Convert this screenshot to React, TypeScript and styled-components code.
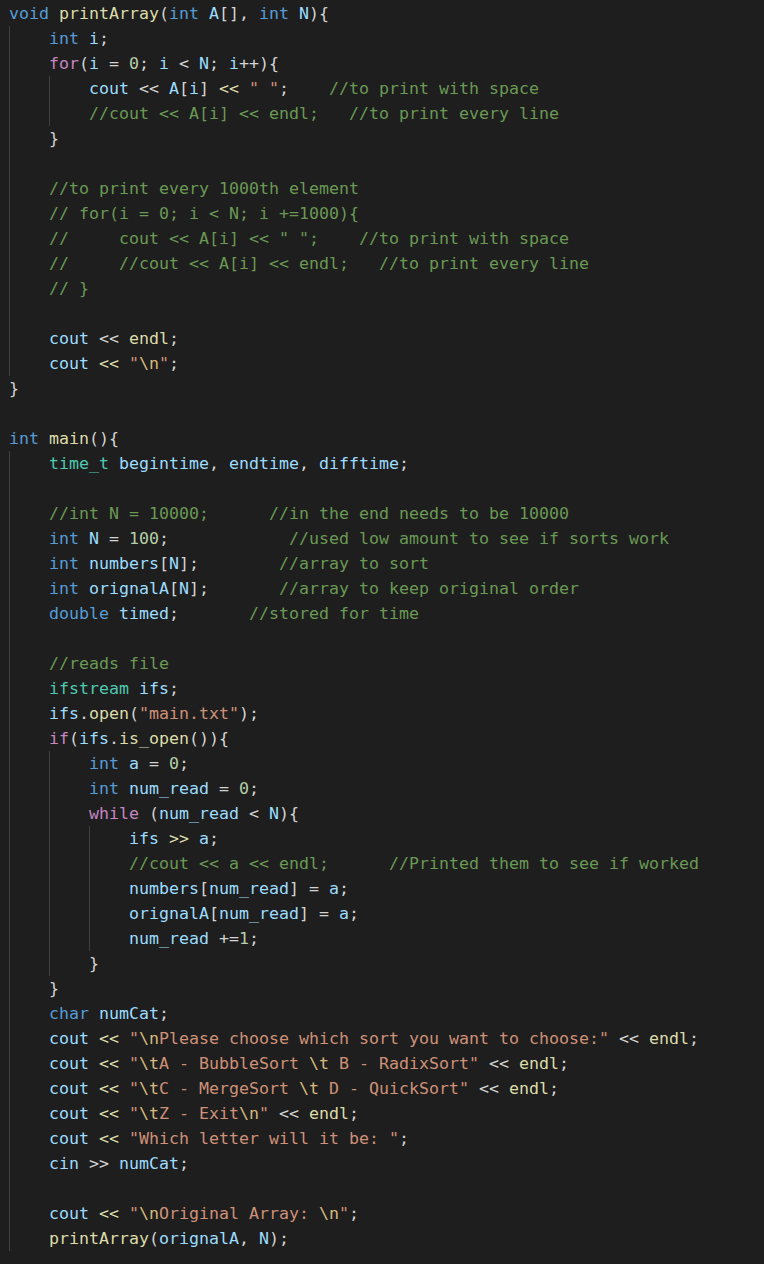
import React from "react";
import styled, { createGlobalStyle } from "styled-components";

const Global = createGlobalStyle`
  html, body { margin: 0; padding: 0; background: #1e1e1e; }
`;

const C = {
  text: "#d4d4d4",
  kw: "#569cd6",
  ctrl: "#c586c0",
  type: "#4ec9b0",
  fn: "#dcdcaa",
  vr: "#9cdcfe",
  num: "#b5cea8",
  str: "#ce9178",
  esc: "#d7ba7d",
  comment: "#6a9955",
};

const Editor = styled.div`
  box-sizing: border-box;
  min-height: 1264px;
  background: #1e1e1e;
  padding: 1px 0 0 9px;
  font-family: "DejaVu Sans Mono", "Liberation Mono", monospace;
  font-size: 16.61px;
  color: ${C.text};
`;

const Line = styled.div`
  display: flex;
  height: 25px;
  line-height: 25px;
  white-space: pre;
`;

const Guide = styled.span`
  flex: none;
  width: 4ch;
  height: 25px;
  box-shadow: inset 1px 0 0 #404040;
`;

const Code = styled.span`
  white-space: pre;
`;

const Tok = styled.span<{ $c: string }>`
  color: ${(p) => p.$c};
`;

const LINES: string[] = [
  String.raw`void printArray(int A[], int N){`,
  String.raw`    int i;`,
  String.raw`    for(i = 0; i < N; i++){`,
  String.raw`        cout << A[i] << " ";    //to print with space`,
  String.raw`        //cout << A[i] << endl;   //to print every line`,
  String.raw`    }`,
  String.raw`    `,
  String.raw`    //to print every 1000th element`,
  String.raw`    // for(i = 0; i < N; i +=1000){`,
  String.raw`    //     cout << A[i] << " ";    //to print with space`,
  String.raw`    //     //cout << A[i] << endl;   //to print every line`,
  String.raw`    // }`,
  String.raw`    `,
  String.raw`    cout << endl;`,
  String.raw`    cout << "\n";`,
  String.raw`}`,
  String.raw``,
  String.raw`int main(){`,
  String.raw`    time_t begintime, endtime, difftime;`,
  String.raw`    `,
  String.raw`    //int N = 10000;      //in the end needs to be 10000`,
  String.raw`    int N = 100;            //used low amount to see if sorts work`,
  String.raw`    int numbers[N];        //array to sort`,
  String.raw`    int orignalA[N];       //array to keep original order`,
  String.raw`    double timed;       //stored for time`,
  String.raw`    `,
  String.raw`    //reads file`,
  String.raw`    ifstream ifs;`,
  String.raw`    ifs.open("main.txt");`,
  String.raw`    if(ifs.is_open()){`,
  String.raw`        int a = 0;`,
  String.raw`        int num_read = 0;`,
  String.raw`        while (num_read < N){`,
  String.raw`            ifs >> a;`,
  String.raw`            //cout << a << endl;      //Printed them to see if worked`,
  String.raw`            numbers[num_read] = a;`,
  String.raw`            orignalA[num_read] = a;`,
  String.raw`            num_read +=1;`,
  String.raw`        }`,
  String.raw`    }`,
  String.raw`    char numCat;`,
  String.raw`    cout << "\nPlease choose which sort you want to choose:" << endl;`,
  String.raw`    cout << "\tA - BubbleSort \t B - RadixSort" << endl;`,
  String.raw`    cout << "\tC - MergeSort \t D - QuickSort" << endl;`,
  String.raw`    cout << "\tZ - Exit\n" << endl;`,
  String.raw`    cout << "Which letter will it be: ";`,
  String.raw`    cin >> numCat;`,
  String.raw`    `,
  String.raw`    cout << "\nOriginal Array: \n";`,
  String.raw`    printArray(orignalA, N);`,
];

const KW = new Set(["void", "int", "double", "char"]);
const CTRL = new Set(["for", "if", "while"]);
const TYPES = new Set(["ifstream", "time_t"]);

type Token = [string, string];

function tokenize(s: string): Token[] {
  const out: Token[] = [];
  let i = 0;
  let plain = "";
  const flush = () => {
    if (plain) {
      out.push([C.text, plain]);
      plain = "";
    }
  };
  while (i < s.length) {
    const ch = s[i];
    if (s.startsWith("//", i)) {
      flush();
      out.push([C.comment, s.slice(i)]);
      break;
    }
    if (ch === '"') {
      flush();
      out.push([C.str, '"']);
      let j = i + 1;
      let buf = "";
      while (j < s.length && s[j] !== '"') {
        if (s[j] === "\\") {
          if (buf) {
            out.push([C.str, buf]);
            buf = "";
          }
          out.push([C.esc, s.slice(j, j + 2)]);
          j += 2;
        } else {
          buf += s[j];
          j++;
        }
      }
      if (buf) out.push([C.str, buf]);
      out.push([C.str, '"']);
      i = j + 1;
      continue;
    }
    if (/[A-Za-z_]/.test(ch)) {
      flush();
      let j = i;
      while (j < s.length && /[A-Za-z0-9_]/.test(s[j])) j++;
      const word = s.slice(i, j);
      let color = C.vr;
      if (KW.has(word)) color = C.kw;
      else if (CTRL.has(word)) color = C.ctrl;
      else if (TYPES.has(word)) color = C.type;
      else if (word === "endl" || s[j] === "(") color = C.fn;
      out.push([color, word]);
      i = j;
      continue;
    }
    if (/[0-9]/.test(ch)) {
      flush();
      let j = i;
      while (j < s.length && /[0-9]/.test(s[j])) j++;
      out.push([C.num, s.slice(i, j)]);
      i = j;
      continue;
    }
    if (s.startsWith("<<", i) || s.startsWith(">>", i)) {
      flush();
      const rest = s.slice(i + 2).trimStart();
      const yellow = rest.startsWith('"') || s.trim().startsWith("ifs >>");
      out.push([yellow ? C.fn : C.text, s.slice(i, i + 2)]);
      i += 2;
      continue;
    }
    plain += ch;
    i++;
  }
  flush();
  return out;
}

function CodeLine({ src }: { src: string }) {
  const lead = src.length - src.trimStart().length;
  const levels = Math.floor(lead / 4);
  const body = src.slice(levels * 4);
  return (
    <Line>
      {Array.from({ length: levels }, (_, k) => (
        <Guide key={k} />
      ))}
      <Code>
        {tokenize(body).map(([c, t], k) => (
          <Tok key={k} $c={c}>
            {t}
          </Tok>
        ))}
      </Code>
    </Line>
  );
}

export default function App() {
  return (
    <>
      <Global />
      <Editor>
        {LINES.map((l, i) => (
          <CodeLine key={i} src={l} />
        ))}
      </Editor>
    </>
  );
}
